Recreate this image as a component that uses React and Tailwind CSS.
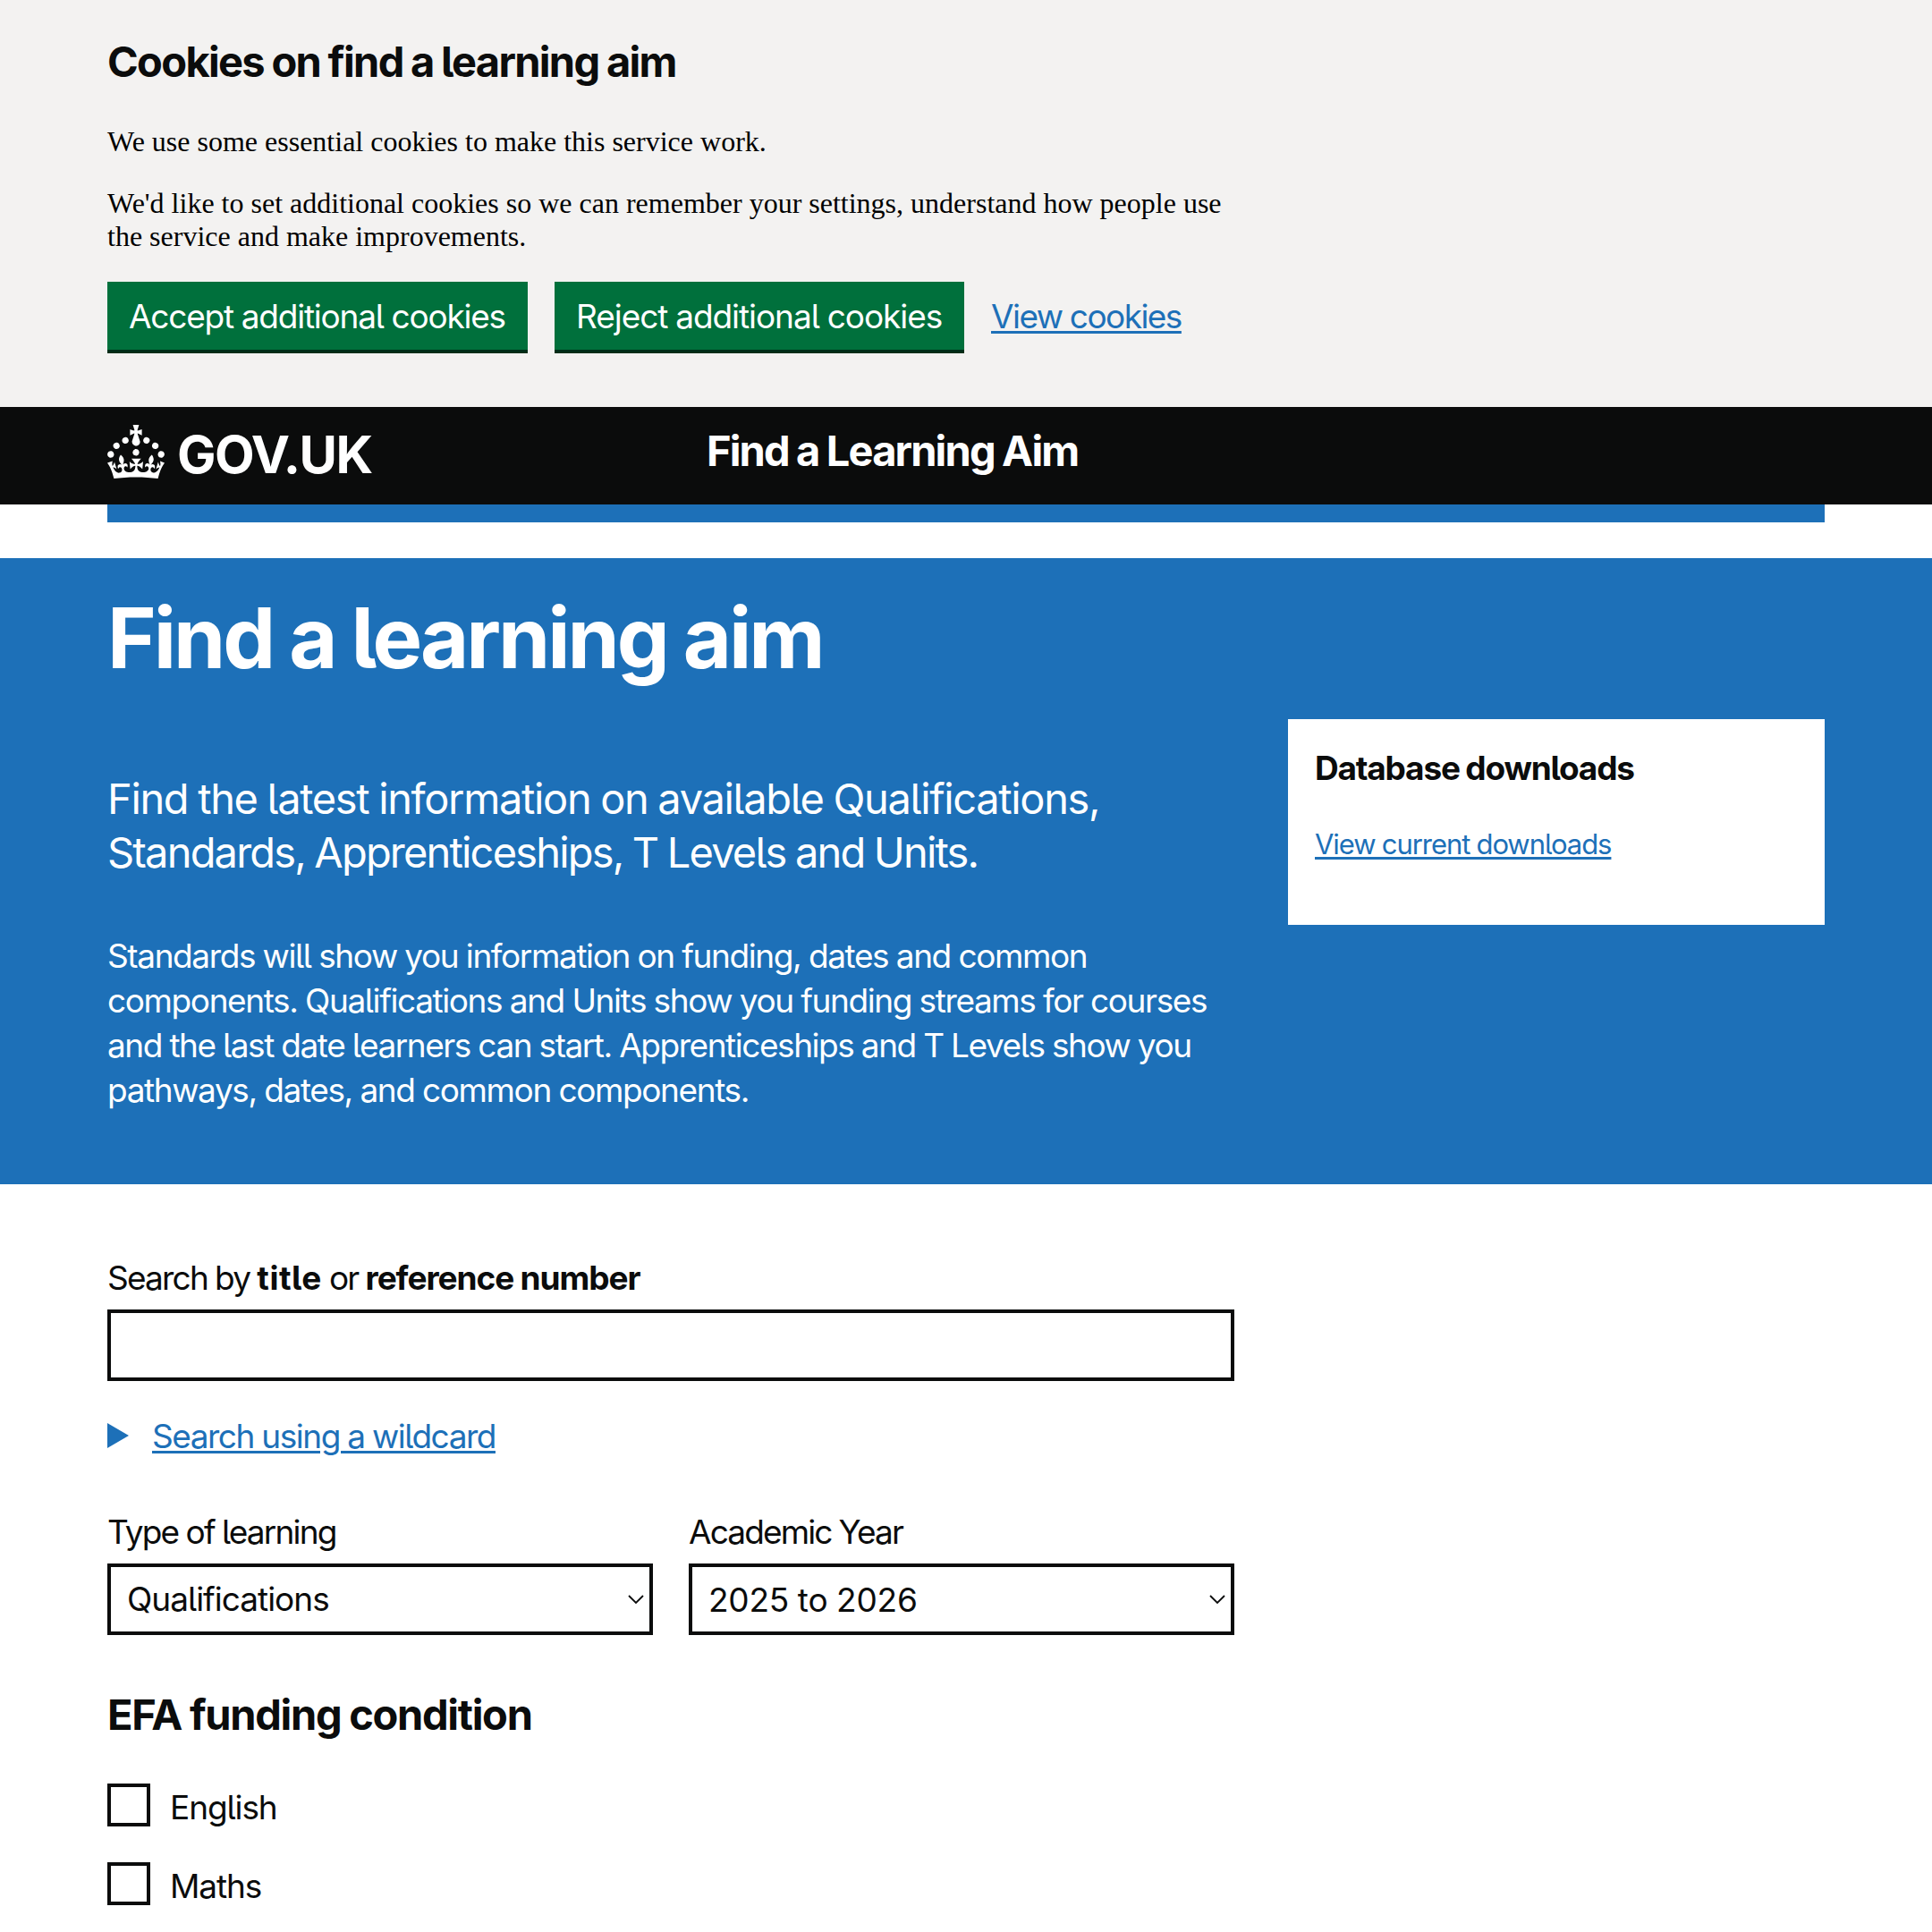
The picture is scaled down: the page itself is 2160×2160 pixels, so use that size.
const CROWN =
  "M22.6 10.4c-1 .4-2-.1-2.4-1-.4-.9.1-2 1-2.4.9-.4 2 .1 2.4 1s-.1 2-1 2.4m-5.9 6.7c-.9.4-2-.1-2.4-1-.4-.9.1-2 1-2.4.9-.4 2 .1 2.4 1s-.1 2-1 2.4m10.8-3.7c-1 .4-2-.1-2.4-1-.4-.9.1-2 1-2.4.9-.4 2 .1 2.4 1s0 2-1 2.4m3.3 4.8c-1 .4-2-.1-2.4-1-.4-.9.1-2 1-2.4.9-.4 2 .1 2.4 1s-.1 2-1 2.4M17 4.7l2.3 1.2V2.5l-2.3.7-.2-.2.9-3h-3.4l.9 3-.2.2c-.1.1-2.3-.7-2.3-.7v3.4L15 4.7c.1.1.1.2.2.2l-1.3 4c-.1.2-.1.4-.1.6 0 1.1.8 2 1.9 2.2h.7c1-.2 1.9-1.1 1.9-2.1 0-.2 0-.4-.1-.6l-1.3-4c-.1-.2 0-.2.1-.3m-7.6 5.7c.9.4 2-.1 2.4-1 .4-.9-.1-2-1-2.4-.9-.4-2 .1-2.4 1s0 2 1 2.4m-5 3c.9.4 2-.1 2.4-1 .4-.9-.1-2-1-2.4-.9-.4-2 .1-2.4 1s.1 2 1 2.4m-3.2 4.8c.9.4 2-.1 2.4-1 .4-.9-.1-2-1-2.4-.9-.4-2 .1-2.4 1s0 2 1 2.4m14.8 11c4.4 0 8.6.3 12.3.8 1.1-4.5 2.4-7 3.7-8.8l-2.5-.9c.2 1.3.3 1.9 0 2.7-.4-.4-.8-1.1-1.1-2.3l-1.2 4c.7-.5 1.3-.8 2-.9-1.1 2.5-2.6 3.1-3.5 3-1.1-.2-1.7-1.2-1.5-2.1.3-1.2 1.5-1.5 2.1-.1 1.1-2.3-.8-3-2-2.3 1.9-1.9 2.1-3.5.6-5.6-2.1 1.6-2.1 3.2-1.2 5.5-1.2-1.4-3.2-.6-2.5 1.6.9-1.4 2.1-.5 1.9.8-.2 1.1-1.7 2.1-3.5 1.9-2.7-.2-2.9-2.1-2.9-3.6.7-.1 1.9.5 2.9 1.9l.4-4.3c-1.1 1.1-2.1 1.4-3.2 1.4.4-1.2 2.1-3 2.1-3h-5.4s1.7 1.9 2.1 3c-1.1 0-2.1-.2-3.2-1.4l.4 4.3c1-1.4 2.2-2 2.9-1.9-.1 1.5-.2 3.4-2.9 3.6-1.9.2-3.4-.8-3.5-1.9-.2-1.3 1-2.2 1.9-.8.7-2.3-1.2-3-2.5-1.6.9-2.2.9-3.9-1.2-5.5-1.5 2-1.3 3.7.6 5.6-1.2-.7-3.1 0-2 2.3.6-1.4 1.8-1.1 2.1.1.2.9-.3 1.9-1.5 2.1-.9.2-2.4-.5-3.5-3 .6 0 1.2.3 2 .9l-1.2-4c-.3 1.1-.7 1.9-1.1 2.3-.3-.8-.2-1.4 0-2.7l-2.9.9C1.3 23 2.6 25.5 3.7 30c3.7-.5 7.9-.8 12.3-.8";

const body = "text-[37px] leading-[50px] [word-spacing:-0.5px]";
const heading = "text-[47px] font-bold leading-[60px] [word-spacing:-1px]";
const link =
  "text-[#1d70b8] underline decoration-[3px] underline-offset-[3px]";

function CookieButton({ className, children }) {
  return (
    <button
      className={`h-[76px] bg-[#00703c] px-[24px] pt-[1px] text-left text-white shadow-[0_4px_0_#002d18] whitespace-nowrap ${body} ${className}`}
    >
      {children}
    </button>
  );
}

function SelectField({ label, labelClass, value, valueClass }) {
  return (
    <div className="w-[610px]">
      <label className={`block ${body} ${labelClass}`}>{label}</label>
      <div className="relative mt-[10px] flex h-[80px] items-center border-4 border-[#0b0c0c] bg-white">
        <span className={`${body} ${valueClass}`}>{value}</span>
        <svg
          className="absolute top-[30px] right-[6px]"
          width="18"
          height="13"
          viewBox="0 0 18 13"
          fill="none"
          stroke="#0b0c0c"
          strokeWidth="1.8"
        >
          <path d="M1 2l8 8 8-8" />
        </svg>
      </div>
    </div>
  );
}

function Checkbox({ label, className }) {
  return (
    <div className="flex h-[88px] items-start">
      <span className="h-[48px] w-[48px] border-4 border-[#0b0c0c] bg-white" />
      <label className={`ml-[22px] mt-[2px] ${body} ${className}`}>
        {label}
      </label>
    </div>
  );
}

export default function App() {
  return (
    <div className="h-[2160px] w-[2160px] overflow-hidden bg-white font-['Inter',sans-serif] text-[#0b0c0c] [font-feature-settings:'cv05']">
      <section className="h-[455px] bg-[#f3f2f1] px-[120px] pt-[39px]">
        <h2 className={`${heading} tracking-[-1.68px]`}>
          Cookies on find a learning aim
        </h2>
        <div className="mt-[41px] w-[1260px] font-['Liberation_Serif',serif] text-[32px] leading-[37px] text-black">
          <p>We use some essential cookies to make this service work.</p>
          <p className="mt-[32px]">
            We'd like to set additional cookies so we can remember your
            settings, understand how people use
            <br />
            the service and make improvements.
          </p>
        </div>
        <div className="mt-[32px] flex items-center">
          <CookieButton className="w-[470px] tracking-[-1.2px]">
            Accept additional cookies
          </CookieButton>
          <CookieButton className="ml-[30px] w-[458px] tracking-[-1.05px]">
            Reject additional cookies
          </CookieButton>
          <a className={`mt-[2px] ml-[30px] ${body} ${link} tracking-[-1.55px]`}>
            View cookies
          </a>
        </div>
      </section>

      <header className="flex h-[109px] items-start bg-[#0b0c0c] px-[120px] text-white">
        <div className="flex w-[670px] items-start">
          <svg
            className="mt-[20px]"
            width="64"
            height="60"
            viewBox="0 0 32 30"
            fill="currentColor"
          >
            <path d={CROWN} />
          </svg>
          <span className="mt-[23px] ml-[14px] text-[58px] font-bold leading-[60px] tracking-[-1.6px]">
            GOV.UK
          </span>
        </div>
        <span className={`mt-[19px] ${heading} tracking-[-1.85px]`}>
          Find a Learning Aim
        </span>
      </header>
      <div className="mx-[120px] h-[20px] bg-[#1d70b8]" />

      <section className="mt-[40px] h-[700px] bg-[#1d70b8] px-[120px] pt-[39px] text-white">
        <h1 className="text-[93.5px] font-bold leading-[100px] tracking-[-3.05px] [word-spacing:-1px]">
          Find a learning aim
        </h1>
        <div className="mt-[41px] flex items-start gap-[60px]">
          <div className="w-[1260px] whitespace-nowrap pt-[59px]">
            <p className="text-[47px] leading-[60px] [word-spacing:-1px]">
              <span className="tracking-[-1.35px]">
                Find the latest information on available Qualifications,
              </span>
              <br />
              <span className="tracking-[-1.82px]">
                Standards, Apprenticeships, T Levels and Units.
              </span>
            </p>
            <p className={`mt-[61px] ${body} tracking-[-1.39px]`}>
              Standards will show you information on funding, dates and common
              <br />
              components. Qualifications and Units show you funding streams for
              courses
              <br />
              <span className="tracking-[-1.45px]">
                and the last date learners can start. Apprenticeships and T
                Levels show you
              </span>
              <br />
              pathways, dates, and common components.
            </p>
          </div>
          <aside className="h-[230px] w-[600px] bg-white px-[30px] pt-[30px]">
            <h2 className="text-[37px] font-bold leading-[50px] tracking-[-1.2px] text-[#0b0c0c] [word-spacing:-1px]">
              Database downloads
            </h2>
            <p className="mt-[40px] text-[31px] leading-[40px] tracking-[-1.05px] [word-spacing:-0.5px]">
              <a className={link}>View current downloads</a>
            </p>
          </aside>
        </div>
      </section>

      <main className="w-[1380px] pt-[80px] pl-[120px]">
        <label className={`block ${body} tracking-[-1.8px]`}>
          Search by <b className="tracking-[0.5px]">title</b> or{" "}
          <b className="tracking-[-1.05px]">reference number</b>
        </label>
        <input className="mt-[10px] block h-[80px] w-[1260px] border-4 border-[#0b0c0c] bg-white px-[10px]" />
        <div className="mt-[37px] flex items-start">
          <svg
            className="mt-[10px]"
            width="24"
            height="28"
            viewBox="0 0 24 28"
            fill="#1d70b8"
          >
            <path d="M0 0l24 14L0 28z" />
          </svg>
          <span className={`ml-[26px] ${body} ${link} tracking-[-1.48px]`}>
            Search using a wildcard
          </span>
        </div>
        <div className="mt-[57px] flex gap-[40px]">
          <SelectField
            label="Type of learning"
            labelClass="tracking-[-1.8px]"
            value="Qualifications"
            valueClass="ml-[18px] mb-[1px] tracking-[-1px]"
          />
          <SelectField
            label="Academic Year"
            labelClass="tracking-[-1.87px]"
            value="2025 to 2026"
            valueClass="ml-[18px] mt-[1px] tracking-[-0.2px]"
          />
        </div>
        <h2 className={`mt-[59px] ${heading} tracking-[-1.3px]`}>
          EFA funding condition
        </h2>
        <div className="mt-[47px]">
          <Checkbox label="English" className="tracking-[-1.1px]" />
          <Checkbox label="Maths" className="tracking-[-1.1px]" />
        </div>
      </main>
    </div>
  );
}
